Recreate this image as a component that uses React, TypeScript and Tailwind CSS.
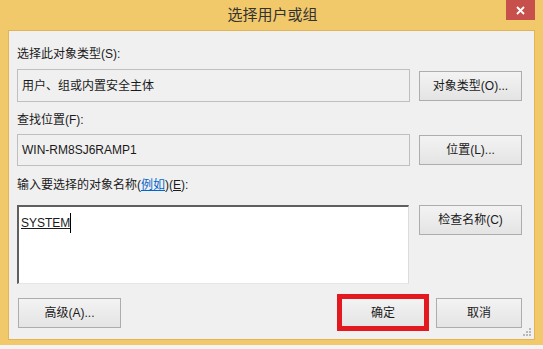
import React from 'react'

const font = "font-['Liberation_Sans','Noto_Sans_CJK_SC',sans-serif]"

function Button({ children, className = '' }: { children: React.ReactNode; className?: string }) {
  return (
    <button
      className={`h-[30px] border border-[#adadad] bg-linear-to-b from-[#f3f3f3] to-[#e4e4e4] text-[12px] text-[#1a1a1a] leading-none ${className}`}
    >
      {children}
    </button>
  )
}

export default function App() {
  return (
    <div className={`w-[543px] h-[349px] bg-[#f1c86a] flex flex-col overflow-hidden ${font}`}>
      {/* 标题栏 */}
      <div className="h-[30px] shrink-0 relative flex items-center justify-center">
        <span className="text-[15px] text-[#333] pl-[2px]">选择用户或组</span>
        <div className="absolute right-[8px] top-0 w-[29px] h-[20px] bg-[#c7504c] flex items-center justify-center">
          <svg width="9" height="9" viewBox="0 0 9 9">
            <path d="M1 1L8 8M8 1L1 8" stroke="white" strokeWidth="1.8" />
          </svg>
        </div>
      </div>

      {/* 客户区 */}
      <div className="mx-[8px] h-[310px] shrink-0 bg-[#f0f0f0] border border-[#e2b458] relative pl-[8px] pr-[12px] pt-[15px] text-[12px] text-[#1a1a1a]">
        <div className="h-[16px] leading-[16px]">选择此对象类型(S):</div>
        <div className="mt-[7px] flex items-center gap-[9px]">
          <div className="w-[393px] h-[33px] border border-[#bfbfbf] bg-[#f0f0f0] flex items-center pl-[4px]">
            用户、组或内置安全主体
          </div>
          <Button className="w-[103px] h-[29px]">对象类型(O)...</Button>
        </div>

        <div className="mt-[10px] h-[16px] leading-[16px]">查找位置(F):</div>
        <div className="mt-[6px] flex items-center gap-[9px]">
          <div className="w-[393px] h-[32px] border border-[#bfbfbf] bg-[#f0f0f0] flex items-center pl-[4px]">
            WIN-RM8SJ6RAMP1
          </div>
          <Button className="w-[103px] h-[29px]">位置(L)...</Button>
        </div>

        <div className="mt-[11px] h-[16px] leading-[16px]">
          输入要选择的对象名称(
          <span className="text-[#0066cc] underline">例如</span>
          )(<span className="underline">E</span>):
        </div>
        <div className="mt-[12px] flex items-start gap-[10px]">
          <div className="w-[392px] h-[79px] bg-white border-t-2 border-l-2 border-t-[#5f5f5f] border-l-[#5f5f5f] border-r border-b border-r-[#dcdcdc] border-b-[#e6e6e6] pl-[2px] pt-[6px]">
            <span className="underline leading-[16px]">SYSTEM</span>
            <span className="inline-block w-[1px] h-[20px] bg-black align-[-6px]" />
          </div>
          <Button className="w-[103px] h-[29px]">检查名称(C)</Button>
        </div>

        <div className="mt-[14px] flex items-center">
          <Button className="w-[103px] ml-[1px]">高级(A)...</Button>
          <div className="ml-auto flex gap-[10px]">
            <div className="relative">
              <Button className="w-[86px]">确定</Button>
              <div className="absolute -left-[3px] -right-[3px] -top-[4px] -bottom-[3px] border-[5px] border-[#e3191f]" />
            </div>
            <Button className="w-[86px]">取消</Button>
          </div>
        </div>

        {/* 尺寸手柄 */}
        <svg className="absolute right-[2px] bottom-[2px]" width="10" height="10" viewBox="0 0 10 10">
          <rect x="7" y="1" width="2" height="2" fill="#b8b8b8" />
          <rect x="4" y="4" width="2" height="2" fill="#b8b8b8" />
          <rect x="7" y="4" width="2" height="2" fill="#b8b8b8" />
          <rect x="1" y="7" width="2" height="2" fill="#b8b8b8" />
          <rect x="4" y="7" width="2" height="2" fill="#b8b8b8" />
          <rect x="7" y="7" width="2" height="2" fill="#b8b8b8" />
        </svg>
      </div>

      <div className="h-[5px] shrink-0" />
      <div className="flex-1 bg-[#f4f4f4]" />
    </div>
  )
}
